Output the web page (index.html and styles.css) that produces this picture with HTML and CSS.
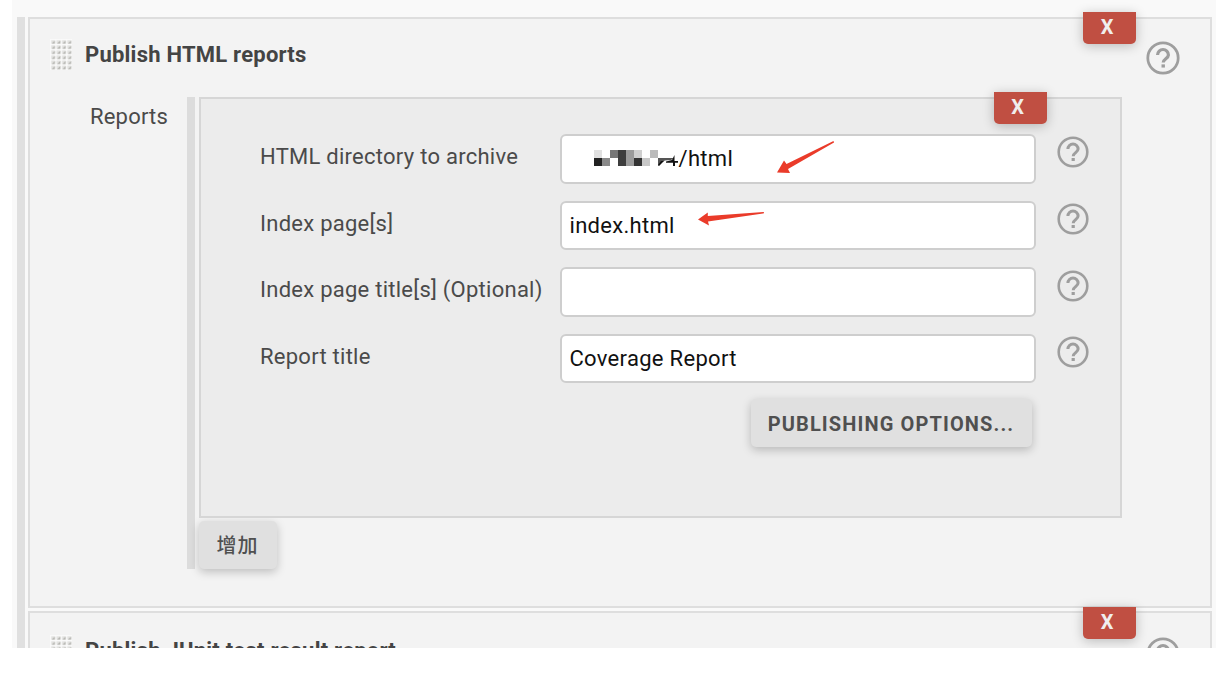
FILE: index.html
```html
<!DOCTYPE html>
<html lang="en">
<head>
<meta charset="utf-8">
<title>Post-build actions</title>
<link rel="stylesheet" href="styles.css">
</head>
<body>
<svg width="0" height="0" class="defs" aria-hidden="true">
  <defs>
    <symbol id="help" viewBox="0 0 32 32">
      <circle cx="16" cy="16" r="14.3" fill="none" stroke="#9e9e9e" stroke-width="2.6"/>
      <path d="M10.9 13.100a5.100 5.100 0 1 1 10.200 0c0 3.300-4.900 3.800-4.900 7.100" fill="none" stroke="#9e9e9e" stroke-width="3"/>
      <rect x="14.600" y="22" width="3.200" height="3" fill="#9e9e9e"/>
    </symbol>
    <pattern id="dot" width="5.4" height="5.1" patternUnits="userSpaceOnUse">
      <rect width="5.4" height="5.1" fill="#fafafa"/>
      <rect x="1.200" y="1.200" width="3.700" height="3.400" fill="#e2e2e0"/>
      <path d="M1.600 4.600L4.900 1.400v3.200z" fill="#b4b4b0"/>
    </pattern>
    <symbol id="grip" viewBox="0 0 22 31"><rect width="22" height="31" fill="url(#dot)"/></symbol>
  </defs>
</svg>
<main class="screen">
  <div class="chunks">
    <section class="chunk chunk-main">
      <button class="del">X</button>
      <header class="head">
        <svg class="grip"><use href="#grip"/></svg>
        <b class="title">Publish HTML reports</b>
        <svg class="help help-lg"><use href="#help"/></svg>
      </header>
      <div class="reports">
        <span class="reports-label">Reports</span>
        <div class="list">
          <div class="item">
            <button class="del">X</button>
            <div class="row">
              <label>HTML directory to archive</label>
              <div class="input">
                <svg class="mosaic" width="85" height="32" viewBox="0 0 85 32" shape-rendering="crispEdges">
                  <path fill="#e0e0e0" d="M0 8h8v8H0z"/><path fill="#222" d="M0 16h8v8H0z"/>
                  <path fill="#8a8a8a" d="M8 16h8v8H8z"/><path fill="#777" d="M16 8h8v8h-8z"/>
                  <path fill="#3d3d3d" d="M24 8h8v16h-8z"/><path fill="#9b9b9b" d="M32 8h8v16h-8z"/>
                  <path fill="#cfcfcf" d="M40 8h8v8h-8z"/><path fill="#333" d="M40 16h8v8h-8z"/>
                  <path fill="#c8c8c8" d="M48 16h8v8h-8z"/><path fill="#bbb" d="M56 8h8v8h-8z"/>
                  <g shape-rendering="auto"><path fill="#555" d="M64 16h16l-3 2-6 .5-3 1.500-4 4z"/><path fill="#111" d="M64 23l3-4h3l-2 2-3 3zM72 19.500l6-1.500 2.500-5v6H84v1.700h-3V24h-2v-3.300h-7z"/></g>
                </svg><span>/html</span>
                <svg class="arrow a1" width="60" height="36" viewBox="0 0 60 36"><path fill="#ea3b2a" d="M0 32.500L7 20.500L9.500 24L56 1.200Q57.500 1.200 57 2.500L11 29L13 33z"/></svg>
              </div>
              <svg class="help"><use href="#help"/></svg>
            </div>
            <div class="row">
              <label>Index page[s]</label>
              <div class="input"><span>index.html</span>
                <svg class="arrow a2" width="68" height="16" viewBox="0 0 68 16"><path fill="#ea3b2a" d="M0 8.500L9.800 1.500V5L65.500 1Q67 2 65 2.500L10 10.500L11 14.500z"/></svg>
              </div>
              <svg class="help"><use href="#help"/></svg>
            </div>
            <div class="row">
              <label>Index page title[s] (Optional)</label>
              <div class="input"></div>
              <svg class="help"><use href="#help"/></svg>
            </div>
            <div class="row">
              <label>Report title</label>
              <div class="input"><span>Coverage Report</span></div>
              <svg class="help"><use href="#help"/></svg>
            </div>
            <button class="btn options">PUBLISHING OPTIONS...</button>
          </div>
          <button class="btn add">增加</button>
        </div>
      </div>
    </section>
    <section class="chunk chunk-next">
      <button class="del">X</button>
      <header class="head">
        <svg class="grip"><use href="#grip"/></svg>
        <b class="title">Publish JUnit test result report</b>
        <svg class="help help-lg"><use href="#help"/></svg>
      </header>
    </section>
  </div>
</main>
</body>
</html>
```
FILE: styles.css
```css
* { box-sizing: border-box; }
body { margin: 0; background: #fff; font-family: Roboto, "Noto Sans CJK SC", sans-serif; font-size: 22px; color: #4a4a4a; }
.defs { position: absolute; }
.screen { width: 1204px; height: 648px; margin-left: 12px; padding: 17px 4px 0 4.5px; background: #f9f9f9; overflow: hidden; }
.chunks { border-left: 8px solid #e0e0e0; padding-left: 3.5px; display: flex; flex-direction: column; gap: 3px; }
.chunk { position: relative; background: #f3f3f3; border: 2px solid #dedede; }
.chunk-main { height: 591px; }
.chunk-next { height: 200px; }
.head { display: flex; align-items: flex-start; padding: 20px 30.5px 0 20px; height: 78px; }
.chunk-next .head { padding-top: 21.5px; }
.chunk-next .del { top: -6.500px; }
.grip { width: 22px; height: 31px; flex: none; }
.title { flex: 1; margin-left: 13px; line-height: 31px; color: #444; white-space: nowrap; letter-spacing: .23px; }
.help { width: 32px; height: 32px; flex: none; display: block; }
.help-lg { width: 34px; height: 34px; margin-top: 2px; }
.del { position: absolute; top: -7px; right: 74px; width: 53px; height: 32px; border: 0; border-radius: 0 0 5px 5px; background: #c04f42; color: #f0eeee; font: 700 20px Roboto, sans-serif; padding: 0 5px 2px 0; box-shadow: 0 2px 12px rgba(0,0,0,.24); }
.item .del { right: 73px; }
.reports { display: flex; align-items: flex-start; }
.reports-label { width: 156.5px; padding-left: 60px; line-height: 40px; letter-spacing: .2px; }
.list { border-left: 8px solid #dcdcdc; padding-left: 4px; height: 472px; }
.item { position: relative; width: 923px; height: 421px; background: #ececec; border: 2px solid #d6d6d6; padding: 35px 31px 0 59px; display: flex; flex-direction: column; }
.row { display: flex; height: 66.6px; flex: none; }
.row label { width: 300px; line-height: 46px; white-space: nowrap; letter-spacing: .26px; padding-left: .5px; }
.input { position: relative; width: 476px; height: 49.500px; background: #fff; border: 2px solid #cecece; border-radius: 6px; color: #111; padding: 0 8px; line-height: 46px; letter-spacing: .3px; display: flex; white-space: nowrap; }
.row .help { margin: 2.400px 0 0 21px; }
.mosaic { margin: 6px 0 0 24px; flex: none; }
.arrow { position: absolute; }
.a1 { left: 215px; top: 4px; }
.a2 { left: 136px; top: 8px; }
.btn { border: 0; border-radius: 5px; background: #e0e0e0; color: #505050; font: 700 20px Roboto, "Noto Sans CJK SC", sans-serif; height: 48px; box-shadow: 0 3px 10px rgba(0,0,0,.22); padding: 0; white-space: nowrap; }
.options { width: 281px; margin: -1px 0 0 491px; padding-top: 1px; letter-spacing: 1.12px; }
.add { display: block; width: 78px; margin-top: 3px; padding-bottom: 2px; letter-spacing: 1px; font-weight: 500; }
```
